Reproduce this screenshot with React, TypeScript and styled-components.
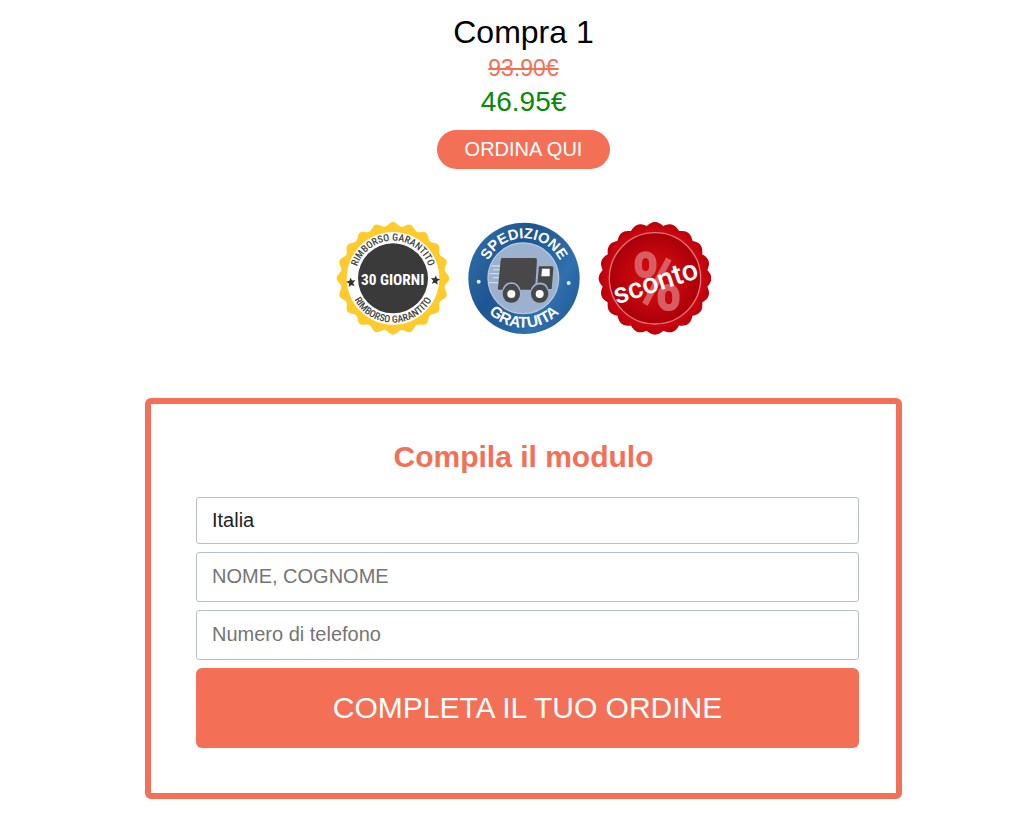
import React from "react";
import styled, { createGlobalStyle } from "styled-components";

const coral = "#f37056";

const GlobalStyle = createGlobalStyle`
  *, *::before, *::after { box-sizing: border-box; }
  body {
    margin: 0;
    background: #fff;
    color: #000;
    font-family: "Liberation Sans", Arial, sans-serif;
  }
`;

const Page = styled.main`
  display: flex;
  flex-direction: column;
  align-items: center;
  padding: 12px 0 20px 36px;
`;

const Offer = styled.section`
  display: flex;
  flex-direction: column;
  align-items: center;
`;

const OfferTitle = styled.h1`
  margin: 0;
  font-size: 32px;
  font-weight: 400;
  line-height: 40px;
`;

const OldPrice = styled.s`
  color: ${coral};
  font-size: 23px;
  line-height: 32px;
`;

const NewPrice = styled.strong`
  color: #078c07;
  font-size: 28px;
  font-weight: 400;
  line-height: 36px;
`;

const OrderLink = styled.a`
  margin-top: 10px;
  padding: 0 28px;
  border-radius: 20px;
  background: ${coral};
  color: #fff;
  font-size: 20px;
  line-height: 39px;
  text-decoration: none;
`;

const Badges = styled.div`
  display: flex;
  flex-wrap: wrap;
  justify-content: center;
  gap: 18px;
  margin: 53px 0 63px;
`;

const BadgeSvg = styled.svg`
  display: block;
  width: 113px;
  height: 113px;
`;

const Panel = styled.section`
  width: 100%;
  max-width: 757px;
  padding: 36px 37px 45px 45px;
  border: 6px solid ${coral};
  border-radius: 6px;
`;

const PanelTitle = styled.h2`
  margin: 0 8px 23px 0;
  color: ${coral};
  font-size: 30px;
  line-height: 34px;
  text-align: center;
`;

const Form = styled.form`
  display: flex;
  flex-direction: column;
  gap: 8px;
`;

const Country = styled.select`
  appearance: none;
  width: 100%;
  height: 47px;
  padding: 0 15px 2px;
  border: 1px solid #b5bfca;
  border-radius: 3px;
  background: #fff;
  color: #222;
  font-family: inherit;
  font-size: 20px;
`;

const Field = styled.input`
  width: 100%;
  height: 50px;
  padding: 0 15px 2px;
  border: 1px solid #b5bfca;
  border-radius: 3px;
  background: #fff;
  color: #222;
  font-family: inherit;
  font-size: 20px;
  &::placeholder { color: #757575; opacity: 1; }
`;

const Submit = styled.button`
  min-height: 80px;
  padding: 0 16px;
  border: 0;
  border-radius: 6px;
  background: ${coral};
  color: #fff;
  font-family: inherit;
  font-size: 30px;
  cursor: pointer;
`;

const narrow = '"Roboto Condensed", "Liberation Sans Narrow", Roboto, sans-serif';

// Closed outline of a round seal whose edge moves between two radii:
// a smooth wave, or round caps that meet in sharp notches.
function sealPath(lobes: number, inner: number, outer: number, notched = false) {
  const steps = lobes * 16;
  let d = "";
  for (let i = 0; i < steps; i++) {
    const a = (i / steps) * Math.PI * 2;
    const wave = notched ? Math.abs(Math.cos((a * lobes) / 2)) : (1 + Math.cos(a * lobes)) / 2;
    const r = inner + (outer - inner) * wave;
    d += `${i ? "L" : "M"}${(189 + r * Math.sin(a)).toFixed(1)} ${(190 - r * Math.cos(a)).toFixed(1)}`;
  }
  return d + "Z";
}

const overArc = (r: number) => `M${189 - r} 190A${r} ${r} 0 0 1 ${189 + r} 190`;
const underArc = (r: number) => `M${189 - r} 190A${r} ${r} 0 0 0 ${189 + r} 190`;

const star = "M0-14L4-5L14-4L6 3L9 13L0 8L-9 13L-6 3L-14-4L-4-5Z";

function RefundBadge() {
  return (
    <BadgeSvg viewBox="18 21 339 339" role="img" aria-label="Rimborso garantito 30 giorni">
      <defs>
        <path id="refund-over" d={overArc(113)} />
        <path id="refund-under" d={underArc(133)} />
      </defs>
      <path d={sealPath(20, 157, 169)} fill="#ffca2c" />
      <circle cx="189" cy="190" r="139" fill="#fff" />
      <circle cx="189" cy="190" r="105" fill="#3b3a3b" />
      <g fill="#444" fontFamily={narrow} fontSize="30" fontWeight="500" textAnchor="middle">
        <text><textPath href="#refund-over" startOffset="50%">RIMBORSO GARANTITO</textPath></text>
        <text><textPath href="#refund-under" startOffset="50%">RIMBORSO GARANTITO</textPath></text>
      </g>
      <path d={star} transform="translate(63 202) rotate(-8)" fill="#333" />
      <path d={star} transform="translate(316 195) rotate(8)" fill="#333" />
      <text x="188" y="209" fill="#fff" fontFamily={narrow} fontSize="46" fontWeight="700" textAnchor="middle">
        30 GIORNI
      </text>
    </BadgeSvg>
  );
}

function ShippingBadge() {
  return (
    <BadgeSvg viewBox="18 21 339 339" role="img" aria-label="Spedizione gratuita">
      <defs>
        <linearGradient id="ship-blue" x1="0" y1="0.2" x2="1" y2="0.8">
          <stop offset="0" stopColor="#2f6da8" />
          <stop offset="0.35" stopColor="#1d5590" />
          <stop offset="0.75" stopColor="#2f70b0" />
          <stop offset="1" stopColor="#205c99" />
        </linearGradient>
        <path id="ship-over" d={overArc(120)} />
        <path id="ship-under" d={underArc(148)} />
      </defs>
      <circle cx="189" cy="190" r="167" fill="url(#ship-blue)" />
      <circle cx="187" cy="190" r="106" fill="#9bb1cd" stroke="#b5c7dc" strokeWidth="4" />
      <g fill="#fff" fontFamily='"Liberation Sans", sans-serif' fontWeight="700" textAnchor="middle">
        <text fontSize="44"><textPath href="#ship-over" startOffset="50%">SPEDIZIONE</textPath></text>
        <text fontSize="47"><textPath href="#ship-under" startOffset="50%">GRATUITA</textPath></text>
      </g>
      <circle cx="53" cy="200" r="6" fill="#e4edf6" />
      <circle cx="323" cy="204" r="6" fill="#e4edf6" />
      <path d="M92 153H122M96 164H121M86 176H119M96 188H117M84 203H115" stroke="#d0dce9" strokeWidth="4" />
      <path d="M124 129H222Q228 129 228 136L222 224H113Q110 224 111 219L119 135Q120 129 124 129Z" fill="#484848" />
      <path d="M234 154H272Q278 154 277 161L272 222H222L223 208H229Z" fill="#484848" />
      <path d="M243 161H266V184H241Z" fill="#fff" />
      <path d="M127 225Q132 204 152 204Q170 205 176 225M212 225Q218 205 238 205Q256 206 260 223" fill="none" stroke="#9bb1cd" strokeWidth="5" />
      <circle cx="151" cy="237" r="26" fill="#484848" />
      <circle cx="236" cy="237" r="26" fill="#484848" />
      <circle cx="151" cy="237" r="12" fill="#fff" />
      <circle cx="236" cy="237" r="12" fill="#fff" />
    </BadgeSvg>
  );
}

function DiscountBadge() {
  return (
    <BadgeSvg viewBox="18 21 339 339" role="img" aria-label="Sconto">
      <defs>
        <radialGradient id="discount-red">
          <stop offset="0" stopColor="#d8090f" />
          <stop offset="0.45" stopColor="#c5060d" />
          <stop offset="0.8" stopColor="#a90009" />
          <stop offset="0.82" stopColor="#cb0810" />
          <stop offset="1" stopColor="#b9000a" />
        </radialGradient>
      </defs>
      <path d={sealPath(20, 159, 169, true)} fill="url(#discount-red)" />
      <circle cx="189" cy="190" r="137" fill="none" stroke="#e3767b" strokeWidth="4" />
      <text x="195" y="284" fill="#d85d62" fontFamily={narrow} fontSize="246" fontWeight="700" textAnchor="middle">
        %
      </text>
      <text transform="translate(199 228) rotate(-18)" fill="#fff" fontFamily="Roboto, sans-serif" fontSize="86" fontWeight="500" textAnchor="middle">
        sconto
      </text>
    </BadgeSvg>
  );
}

export default function App() {
  return (
    <>
      <GlobalStyle />
      <Page>
        <Offer>
          <OfferTitle>Compra 1</OfferTitle>
          <OldPrice>93.90€</OldPrice>
          <NewPrice>46.95€</NewPrice>
          <OrderLink href="#modulo">ORDINA QUI</OrderLink>
        </Offer>
        <Badges>
          <RefundBadge />
          <ShippingBadge />
          <DiscountBadge />
        </Badges>
        <Panel id="modulo">
          <PanelTitle>Compila il modulo</PanelTitle>
          <Form onSubmit={(e) => e.preventDefault()}>
            <Country name="country" aria-label="Paese" defaultValue="IT">
              <option value="IT">Italia</option>
            </Country>
            <Field name="name" type="text" aria-label="Nome, cognome" placeholder="NOME, COGNOME" />
            <Field name="phone" type="tel" aria-label="Numero di telefono" placeholder="Numero di telefono" />
            <Submit type="submit">COMPLETA IL TUO ORDINE</Submit>
          </Form>
        </Panel>
      </Page>
    </>
  );
}
